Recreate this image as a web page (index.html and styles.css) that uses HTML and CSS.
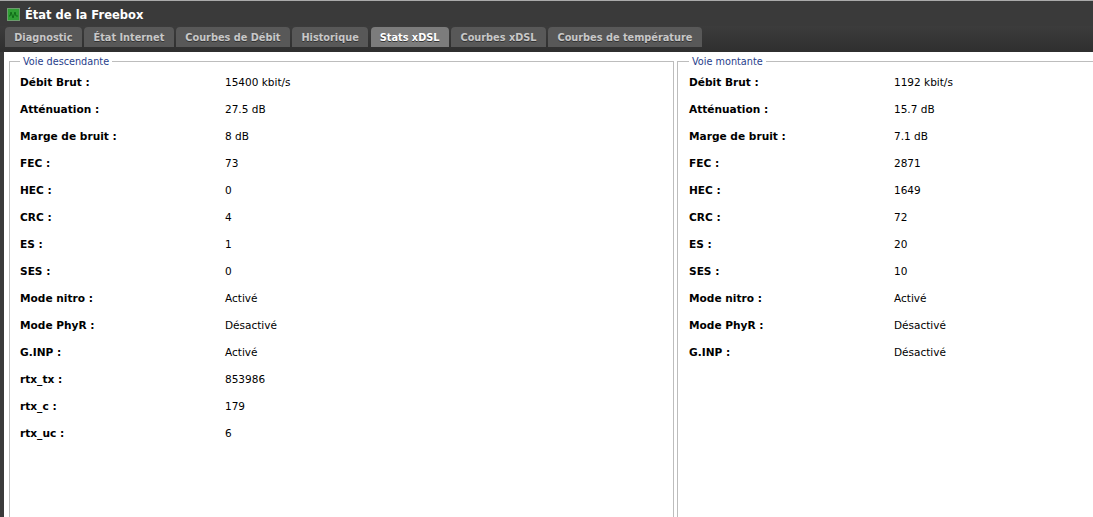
FILE: index.html
```html
<!DOCTYPE html>
<html lang="fr">
<head>
<meta charset="utf-8">
<title>État de la Freebox</title>
<link rel="stylesheet" href="styles.css">
</head>
<body>
<div class="window">
  <header class="titlebar">
    <svg class="appicon" width="13" height="13" viewBox="0 0 13 13">
      <rect width="13" height="13" fill="#2f9e34"/>
      <rect x="0.5" y="0.5" width="12" height="12" fill="none" stroke="#6f9a70"/>
      <path d="M2 8h1l1-4 2 6 2-6 1 4h2" fill="none" stroke="#0f6a18" stroke-width="1"/>
    </svg>
    <span class="title">État de la Freebox</span>
  </header>
  <nav class="tabs">
    <span class="tab">Diagnostic</span>
    <span class="tab">État Internet</span>
    <span class="tab">Courbes de Débit</span>
    <span class="tab">Historique</span>
    <span class="tab active">Stats xDSL</span>
    <span class="tab">Courbes xDSL</span>
    <span class="tab">Courbes de température</span>
  </nav>
  <main class="content">
    <fieldset class="panel down">
      <legend>Voie descendante</legend>
      <dl class="stats">
        <div class="row"><dt>Débit Brut :</dt><dd>15400 kbit/s</dd></div>
        <div class="row"><dt>Atténuation :</dt><dd>27.5 dB</dd></div>
        <div class="row"><dt>Marge de bruit :</dt><dd>8 dB</dd></div>
        <div class="row"><dt>FEC :</dt><dd>73</dd></div>
        <div class="row"><dt>HEC :</dt><dd>0</dd></div>
        <div class="row"><dt>CRC :</dt><dd>4</dd></div>
        <div class="row"><dt>ES :</dt><dd>1</dd></div>
        <div class="row"><dt>SES :</dt><dd>0</dd></div>
        <div class="row"><dt>Mode nitro :</dt><dd>Activé</dd></div>
        <div class="row"><dt>Mode PhyR :</dt><dd>Désactivé</dd></div>
        <div class="row"><dt>G.INP :</dt><dd>Activé</dd></div>
        <div class="row"><dt>rtx_tx :</dt><dd>853986</dd></div>
        <div class="row"><dt>rtx_c :</dt><dd>179</dd></div>
        <div class="row"><dt>rtx_uc :</dt><dd>6</dd></div>
      </dl>
    </fieldset>
    <fieldset class="panel up">
      <legend>Voie montante</legend>
      <dl class="stats">
        <div class="row"><dt>Débit Brut :</dt><dd>1192 kbit/s</dd></div>
        <div class="row"><dt>Atténuation :</dt><dd>15.7 dB</dd></div>
        <div class="row"><dt>Marge de bruit :</dt><dd>7.1 dB</dd></div>
        <div class="row"><dt>FEC :</dt><dd>2871</dd></div>
        <div class="row"><dt>HEC :</dt><dd>1649</dd></div>
        <div class="row"><dt>CRC :</dt><dd>72</dd></div>
        <div class="row"><dt>ES :</dt><dd>20</dd></div>
        <div class="row"><dt>SES :</dt><dd>10</dd></div>
        <div class="row"><dt>Mode nitro :</dt><dd>Activé</dd></div>
        <div class="row"><dt>Mode PhyR :</dt><dd>Désactivé</dd></div>
        <div class="row"><dt>G.INP :</dt><dd>Désactivé</dd></div>
      </dl>
    </fieldset>
  </main>
</div>
</body>
</html>
```
FILE: styles.css
```css
* { box-sizing: border-box; }
html, body { margin: 0; height: 100%; overflow: hidden; background: #fff; }
body { font-family: "DejaVu Sans", Verdana, sans-serif; font-size: 10.6px; color: #000; }
.window { width: 1093px; height: 517px; display: flex; flex-direction: column; background: #3a3a3a; border-top: 1px solid #aaa; }
.titlebar { height: 25px; flex: none; display: flex; align-items: center; gap: 5px; padding: 2px 0 0 7px; background: #3a3a3a; }
.title { color: #fff; font: bold 11.5px "DejaVu Sans", sans-serif; }
.appicon { flex: none; }
.tabs { height: 26px; flex: none; display: flex; gap: 2.5px; padding: 1px 0 0 5px; background: linear-gradient(#3c3c3c, #2f2f2f); }
.tab { height: 20px; padding: 0 9.25px; display: flex; align-items: center; border-radius: 4px 4px 0 0; background: #585858; color: #c8c8c8; font: bold 9.75px "DejaVu Sans", sans-serif; text-shadow: 0 1px 0 #333; }
.tab.active { background: #7c7c7c; color: #fff; }
.content { flex: 1; min-height: 0; display: flex; gap: 3px; margin-left: 4px; padding: 4px 0 0 5px; background: #fff; overflow: hidden; }
.panel { margin: 0; padding: 0 0 0 10px; border: 1px solid #bdbdbd; border-bottom: 0; height: 480px; min-width: 0; }
.panel.down { width: 665px; flex: none; }
.panel.up { flex: 1; margin-right: -3px; padding-left: 11px; }
legend { margin-left: 0; padding: 0 3px; color: #27408b; font-size: 9.7px; line-height: 11px; }
.stats { margin: 1px 0 0; }
.row { height: 27px; display: flex; align-items: center; }
dt { width: 205px; flex: none; font-weight: bold; }
dd { margin: 0; font-size: 10.5px; }
```
